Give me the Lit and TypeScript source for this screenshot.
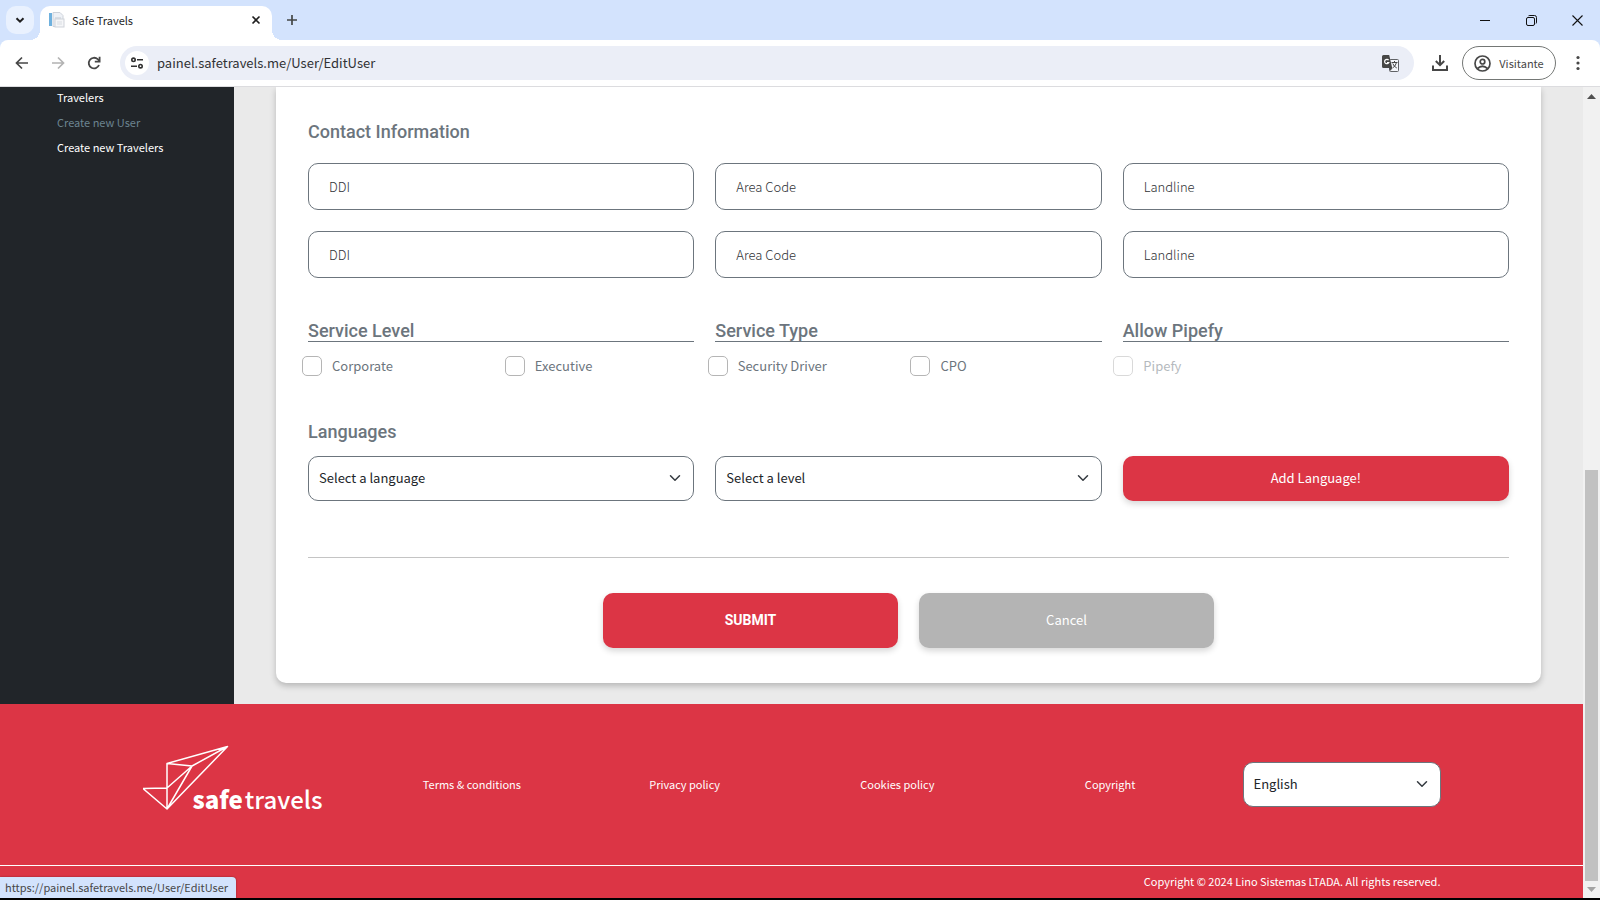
import { LitElement, html, css, svg } from "lit";
import { customElement, property } from "lit/decorators.js";

const chevron = svg`<path d="M2 5l6 6 6-6" fill="none" stroke="#343a40" stroke-width="2" stroke-linecap="round" stroke-linejoin="round"/>`;

@customElement("browser-bar")
export class BrowserBar extends LitElement {
  static styles = css`
    :host { display: block; font-family: "Noto Sans CJK SC", "Open Sans", sans-serif; color: #1f1f1f; }
    * { box-sizing: border-box; }
    button { border: 0; background: none; padding: 0; margin: 0; font: inherit; color: inherit; display: flex; align-items: center; justify-content: center; }
    svg { display: block; }
    .tabs { height: 40px; background: #d3e3fd; display: flex; align-items: flex-end; padding-left: 6px; }
    .search { width: 28px; height: 28px; border-radius: 10px; background: #e9f1fe; margin-bottom: 6px; margin-right: 6px; }
    .tab { position: relative; width: 232px; height: 34px; background: #fff; border-radius: 10px 10px 0 0; display: flex; align-items: center; padding: 0 8px 6px; font-size: 11px; line-height: 18px; }
    .tab::before, .tab::after { content: ""; position: absolute; bottom: 0; width: 10px; height: 10px; }
    .tab::before { left: -10px; background: radial-gradient(circle at 0 0, transparent 10px, #fff 10px); }
    .tab::after { right: -10px; background: radial-gradient(circle at 100% 0, transparent 10px, #fff 10px); }
    .title { flex: 1; margin-left: 7px; }
    .x { width: 16px; height: 16px; }
    .new { width: 28px; height: 28px; margin: 0 0 6px 6px; }
    .gap { flex: 1; }
    .win { width: 46px; height: 40px; }
    .wrap { background: #d3e3fd; border-bottom: 1px solid #dcdcdf; }
    .tools { height: 46px; background: #fff; display: flex; align-items: center; padding: 0 10px 0 12px; border-radius: 8px 8px 0 0; }
    .nav { width: 20px; height: 20px; margin-right: 16px; }
    .url { flex: 1; height: 34px; border-radius: 17px; background: #ebeef7; display: flex; align-items: center; padding: 0 15px 0 5px; margin-right: 16px; }
    .site { width: 24px; height: 24px; border-radius: 50%; background: #fff; margin-right: 8px; flex: none; }
    .address { flex: 1; min-width: 0; border: 0; outline: 0; background: none; font: 13px/20px "Noto Sans CJK SC", "Open Sans", sans-serif; color: #303134; padding: 0; }
    .download { margin-right: 12px; width: 20px; height: 20px; }
    .profile { height: 34px; width: 94px; border: 1px solid #747775; border-radius: 17px; font-size: 11px; line-height: 18px; color: #474747; gap: 8px; }
    .more { width: 24px; height: 24px; margin-left: 10px; }
  `;

  render() {
    return html`
      <div class="tabs">
        <button class="search" aria-label="Search tabs"><svg width="12" height="12" viewBox="0 0 12 12"><path d="M2.5 4.2L6 7.7l3.500-3.500" fill="none" stroke="#1f1f1f" stroke-width="2"/></svg></button>
        <div class="tab">
          <svg width="17" height="16" viewBox="0 0 17 16">
            <path d="M5 .5h7l3 3v11H5z" fill="#eef1f6" stroke="#cdd2da"/>
            <rect x="1" y="1" width="3" height="13" fill="#6fb1de"/>
            <path d="M7 6h6M7 8h6" stroke="#c3cad4"/>
            <rect x="7" y="7" width="9" height="8" fill="#f5f6f8" stroke="#cfd3da"/>
            <path d="M9 10h5M9 12h5" stroke="#d9dde2"/>
          </svg>
          <span class="title">Safe Travels</span>
          <button class="x" aria-label="Close tab"><svg width="10" height="10" viewBox="0 0 10 10"><path d="M1.500 1.500l7 7M8.500 1.500l-7 7" stroke="#1f1f1f" stroke-width="1.600"/></svg></button>
        </div>
        <button class="new" aria-label="New tab"><svg width="12" height="12" viewBox="0 0 12 12"><path d="M6 1v10M1 6h10" stroke="#444746" stroke-width="1.700"/></svg></button>
        <span class="gap"></span>
        <button class="win" aria-label="Minimize"><svg width="10" height="10" viewBox="0 0 10 10"><path d="M0 5.500h10" stroke="#111"/></svg></button>
        <button class="win" aria-label="Restore"><svg width="11" height="11" viewBox="0 0 11 11"><rect x=".5" y="2.500" width="8" height="8" rx="1.500" fill="none" stroke="#111"/><path d="M2.500 .8Q3 .5 4 .5h4.500a2 2 0 0 1 2 2V7q0 1-.4 1.500" fill="none" stroke="#111"/></svg></button>
        <button class="win" aria-label="Close"><svg width="11" height="11" viewBox="0 0 11 11"><path d="M.5 .5l10 10M10.500 .5l-10 10" stroke="#111" stroke-width="1.100"/></svg></button>
      </div>
      <div class="wrap"><div class="tools">
        <button class="nav" aria-label="Back"><svg width="20" height="20" viewBox="0 0 20 20"><path d="M16 10H4.500M10 4.500L4.500 10l5.500 5.500" fill="none" stroke="#474747" stroke-width="1.700"/></svg></button>
        <button class="nav" aria-label="Forward"><svg width="20" height="20" viewBox="0 0 20 20"><path d="M4 10h11.500M10 4.500l5.500 5.500-5.500 5.500" fill="none" stroke="#b3b3b3" stroke-width="1.700"/></svg></button>
        <button class="nav" aria-label="Reload"><svg width="20" height="20" viewBox="0 0 20 20"><path d="M15 12a5.300 5.300 0 1 1-1.300-5.800L15.500 8" fill="none" stroke="#474747" stroke-width="1.800"/><path d="M15.600 3.800v4.800h-4.800" fill="none" stroke="#474747" stroke-width="1.800"/></svg></button>
        <div class="url">
          <button class="site" aria-label="Site information"><svg width="14" height="12" viewBox="0 0 14 12"><g fill="none" stroke="#303030" stroke-width="1.600"><circle cx="3.500" cy="2.800" r="1.700"/><path d="M7 2.800h6M1 9.200h6"/><circle cx="10.500" cy="9.200" r="1.700"/></g></svg></button>
          <input class="address" aria-label="Address" value="painel.safetravels.me/User/EditUser" />
          <button aria-label="Translate"><svg width="17" height="17" viewBox="0 0 17 17"><rect x="7.500" y="4.500" width="9" height="12" rx="1" fill="#f4f6fb" stroke="#606266"/><path d="M1.500 0h5.700l3 13H1.500A1.500 1.500 0 0 1 0 11.500v-10A1.500 1.500 0 0 1 1.500 0z" fill="#474747"/><path d="M7.200 13h3l-1.500 3z" fill="#474747"/><path d="M6.600 5.200a2.200 2.200 0 1 0 .2 2.300H5" fill="none" stroke="#fff" stroke-width="1.200"/><path d="M9.500 7.500h6M12.500 6v1.500M14.500 7.500q-1 4-4 5.500M10.800 8.500q1 3 4 4.500" fill="none" stroke="#474747"/></svg></button>
        </div>
        <button class="download" aria-label="Downloads"><svg width="20" height="20" viewBox="0 0 20 20"><path d="M10 2v10M5.800 8l4.200 4.200L14.200 8M3 12.500V17h14v-4.500" fill="none" stroke="#474747" stroke-width="2"/></svg></button>
        <button class="profile"><svg width="17" height="17" viewBox="0 0 17 17"><g fill="none" stroke="#474747" stroke-width="1.700"><circle cx="8.500" cy="8.500" r="7.500"/><circle cx="8.500" cy="6.700" r="2.300"/><path d="M3.500 13.500q5-4.500 10 0"/></g></svg>Visitante</button>
        <button class="more" aria-label="Menu"><svg width="4" height="16" viewBox="0 0 4 16"><g fill="#474747"><circle cx="2" cy="2.500" r="1.600"/><circle cx="2" cy="8" r="1.600"/><circle cx="2" cy="13.500" r="1.600"/></g></svg></button>
      </div></div>
    `;
  }
}

@customElement("select-box")
export class SelectBox extends LitElement {
  @property() label = "";
  @property() option = "";

  static styles = css`
    :host { display: block; position: relative; }
    select { appearance: none; box-sizing: border-box; display: block; width: 100%; height: 45px; border: 1px solid #6c757d; border-radius: 10px; background: #fff; color: #212529; padding: 0 32px 1px 10px; font: 13px/20px "Noto Sans CJK SC", sans-serif; }
    svg { position: absolute; right: 13px; top: 16px; pointer-events: none; }
  `;

  render() {
    return html`<select aria-label=${this.label}><option>${this.option}</option></select>
      <svg width="12" height="12" viewBox="0 0 16 16">${chevron}</svg>`;
  }
}

@customElement("app-root")
export class AppRoot extends LitElement {
  static styles = css`
    :host { display: flex; flex-direction: column; height: 100vh; box-sizing: border-box; border-bottom: 2px solid #000; overflow: hidden; font-family: "Noto Sans CJK SC", sans-serif; position: relative; }
    * { box-sizing: border-box; }
    a { color: inherit; text-decoration: none; }
    button { font: inherit; border: 0; color: #fff; border-radius: 10px; box-shadow: 0 3px 6px rgba(0, 0, 0, 0.16); }
    .view { flex: 1; min-height: 0; display: flex; }
    .page { flex: 1; min-width: 0; display: flex; flex-direction: column; }
    .body { flex: 1; display: flex; }
    .side { width: 234px; background: #212529; color: #fff; padding: 0 0 0 57px; display: flex; flex-direction: column; gap: 4px; font-size: 11px; line-height: 21px; }
    .side .current { color: #6c8490; }
    .main { flex: 1; background: #eaeaea; padding: 0 42px 21px; overflow: hidden; }
    .card { background: #fff; border-radius: 0 0 10px 10px; box-shadow: 0 3px 6px rgba(0, 0, 0, 0.22); padding: 33px 32px 35px; height: 100%; }
    h2 { margin: 0; font: 500 18px/24px Roboto, sans-serif; color: #6c757d; }
    .row { display: grid; grid-template-columns: repeat(3, 1fr); gap: 21px; }
    .fields { margin-top: 19px; }
    .field { height: 47px; width: 100%; border: 1px solid #6c757d; border-radius: 10px; padding: 0 20px; font: 300 13px/20px "Noto Sans CJK SC", sans-serif; }
    .field::placeholder { color: #303336; opacity: 1; }
    .groups { margin-top: 43px; }
    .groups h2 { border-bottom: 1px solid #6c757d; line-height: 20px; }
    .checks { display: grid; grid-template-columns: repeat(6, 1fr); margin: 14px -10px 0 -6px; }
    .check { display: flex; align-items: center; gap: 10px; font-size: 13px; line-height: 20px; color: #6c757d; }
    .check input { appearance: none; width: 20px; height: 20px; margin: 0; border: 1px solid #b5b5b5; border-radius: 5px; background: #fff; }
    .check.off { opacity: 0.5; }
    .languages { margin-top: 44px; }
    .picks { margin-top: 12px; }
    .add { background: #dc3545; font-size: 13px; line-height: 20px; padding-bottom: 2px; }
    .line { border: 0; border-top: 1px solid #c4c4c4; margin: 56px 0 35px; }
    .actions { display: flex; justify-content: center; gap: 21px; }
    .actions button { width: 295px; height: 55px; padding-bottom: 2px; font-size: 13px; line-height: 20px; }
    .actions .submit { background: #dc3545; font: 700 14px/20px Roboto, sans-serif; }
    .actions .cancel { background: #b4b4b4; }
    footer { background: #dc3545; color: #fff; font-size: 11px; line-height: 18px; }
    .foot { max-width: 1298px; margin: 0 auto; display: grid; grid-template-columns: 223px repeat(4, 1fr) 198px; align-items: center; text-align: center; height: 161px; }
    .foot .links { grid-column: 2 / 6; display: grid; grid-template-columns: repeat(4, 1fr); padding: 0 26px 2px 0; }
    .logo { width: 181px; height: 80px; position: relative; }
    .logo svg { display: block; }
    .word { position: absolute; left: 50px; bottom: 10px; font: 500 24px/32px "Noto Sans CJK SC", sans-serif; white-space: nowrap; }
    .word b { font-weight: 900; margin-right: 2px; }
    .legal { border-top: 1px solid #fff; }
    .legal p { max-width: 1298px; margin: 0 auto; text-align: right; line-height: 30px; padding-bottom: 2px; }
    .scroll { width: 17px; background: #f1f1f1; display: flex; flex-direction: column; align-items: center; padding: 7px 0 6px; }
    .track { flex: 1; display: flex; flex-direction: column; justify-content: flex-end; padding: 6px 0; }
    .thumb { width: 13px; height: 411px; background: #c1c1c1; }
    .status { position: absolute; left: 0; bottom: 0; height: 21px; padding: 0 8px 0 5px; background: #d3e3fd; color: #474747; border-top-right-radius: 4px; font-size: 11px; line-height: 20px; box-shadow: 0 0 2px rgba(0, 0, 0, 0.4); }
  `;

  private field(label: string) {
    return html`<input class="field" type="text" aria-label=${label} placeholder=${label} />`;
  }

  private check(label: string, disabled = false) {
    return html`<label class="check ${disabled ? "off" : ""}"><input type="checkbox" ?disabled=${disabled} />${label}</label>`;
  }

  render() {
    const fields = ["DDI", "Area Code", "Landline"];
    return html`
      <browser-bar></browser-bar>
      <div class="view">
        <div class="page">
          <div class="body">
            <nav class="side">
              <a href="#">Travelers</a>
              <a href="#" class="current">Create new User</a>
              <a href="#">Create new Travelers</a>
            </nav>
            <main class="main">
              <form class="card">
                <h2>Contact Information</h2>
                <div class="row fields">${[...fields, ...fields].map((f) => this.field(f))}</div>
                <div class="row groups"><h2>Service Level</h2><h2>Service Type</h2><h2>Allow Pipefy</h2></div>
                <div class="checks">
                  ${this.check("Corporate")}${this.check("Executive")}${this.check("Security Driver")}${this.check("CPO")}${this.check("Pipefy", true)}
                </div>
                <h2 class="languages">Languages</h2>
                <div class="row picks">
                  <select-box label="Language" option="Select a language"></select-box>
                  <select-box label="Level" option="Select a level"></select-box>
                  <button class="add" type="button">Add Language!</button>
                </div>
                <hr class="line" />
                <div class="actions">
                  <button class="submit" type="button">SUBMIT</button>
                  <button class="cancel" type="button">Cancel</button>
                </div>
              </form>
            </main>
          </div>
          <footer>
            <div class="foot">
              <div class="logo">
                <svg width="86" height="66" viewBox="0 0 86 66"><path d="M84.500 1.500L24 18.500V64L84.500 1.500L49 21L24 18.500M49 21L24 43L0 43.500L24 64L49 21" fill="none" stroke="#fff" stroke-width="1.500" stroke-linejoin="round"/></svg>
                <span class="word"><b>safe</b>travels</span>
              </div>
              <div class="links">
                <a href="#">Terms &amp; conditions</a><a href="#">Privacy policy</a><a href="#">Cookies policy</a><a href="#">Copyright</a>
              </div>
              <select-box label="Site language" option="English"></select-box>
            </div>
            <div class="legal"><p>Copyright © 2024 Lino Sistemas LTADA. All rights reserved.</p></div>
          </footer>
        </div>
        <div class="scroll">
          <svg width="9" height="5" viewBox="0 0 9 5"><path d="M4.500 0L9 5H0z" fill="#505050"/></svg>
          <div class="track"><div class="thumb"></div></div>
          <svg width="9" height="5" viewBox="0 0 9 5"><path d="M4.500 5L0 0h9z" fill="#a3a3a3"/></svg>
        </div>
      </div>
      <div class="status">https://painel.safetravels.me/User/EditUser</div>
    `;
  }
}
